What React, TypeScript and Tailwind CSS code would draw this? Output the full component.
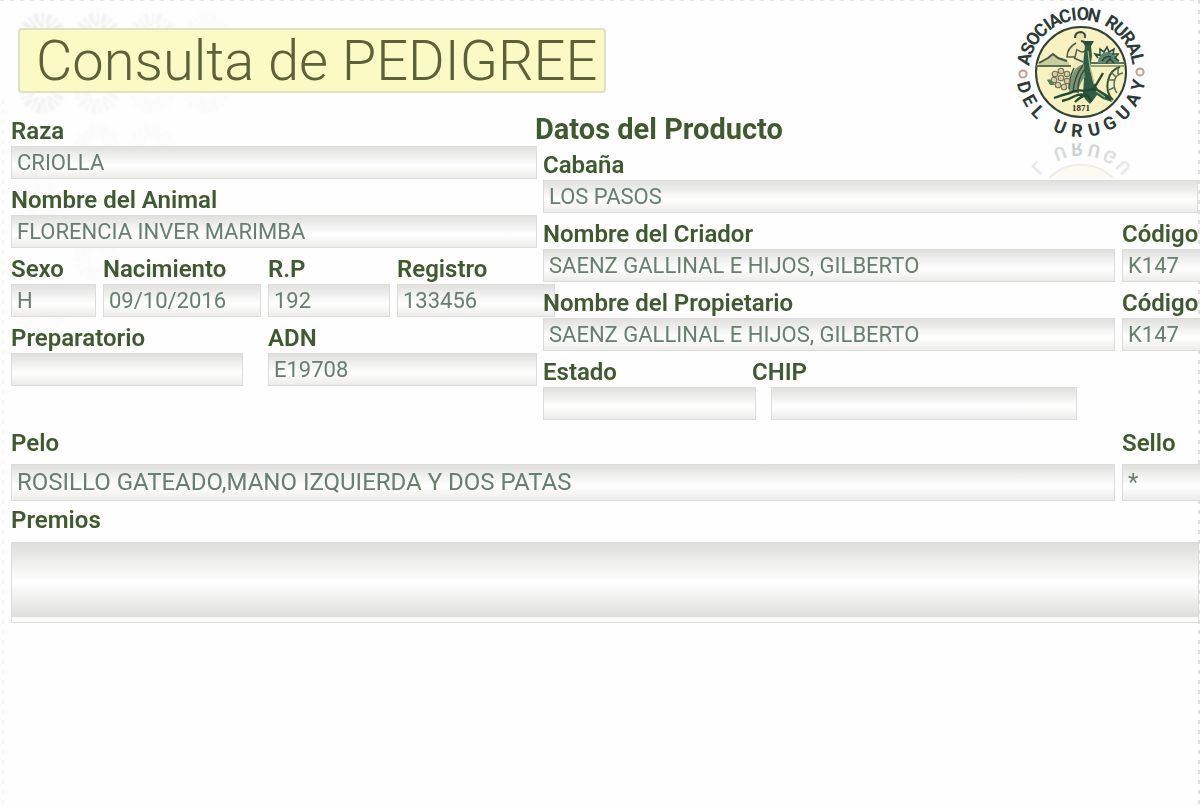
import React, { useId } from "react";

const labelClass = "block h-[30px] whitespace-nowrap text-[24px] leading-[31px] font-semibold text-[#3f5a2e]";
const inputClass =
  "block w-full min-w-0 border border-[#dcdcda] bg-linear-to-b from-[#e0e0df] via-white via-60% to-[#ececea] px-[5px] text-[#66806f] outline-none";
const rowInput = "h-[33px] pb-px text-[22px] leading-7";

type FieldProps = { label: string; value?: string; inputWidth?: string };

function Field({ label, value = "", inputWidth = "" }: FieldProps) {
  const id = useId();
  return (
    <div className="min-w-0">
      <label htmlFor={id} className={labelClass}>{label}</label>
      <input id={id} type="text" readOnly defaultValue={value} className={`${inputClass} ${rowInput} ${inputWidth}`} />
    </div>
  );
}

const topLetters: [string, number][] = [
  ["A", -77], ["S", -66], ["O", -55], ["C", -44], ["I", -35], ["A", -27], ["C", -16], ["I", -7], ["O", 2], ["N", 13],
  ["R", 32], ["U", 43], ["R", 54], ["A", 66], ["L", 77],
];
const bottomLetters: [string, number][] = [
  ["D", -75], ["E", -61], ["L", -47], ["U", -21], ["R", -4], ["U", 13], ["G", 29], ["U", 46], ["A", 62], ["Y", 77],
];
const letterStyle = {
  fontFamily: "Roboto, sans-serif",
  fontSize: 18,
  fontWeight: 700,
  fill: "#2c3b36",
  textAnchor: "middle" as const,
};

function Emblem() {
  return (
    <g>
      <g {...letterStyle}>
        {topLetters.map(([c, a], i) => (
          <text key={i} x="80" y="20" transform={`rotate(${a} 80 72)`}>{c}</text>
        ))}
        {bottomLetters.map(([c, a], i) => (
          <text key={i} x="80" y="137" transform={`rotate(${-a} 80 72)`}>{c}</text>
        ))}
      </g>
      <circle cx="22" cy="74" r="3.6" fill="#fff" stroke="#c39c90" strokeWidth="2" />
      <circle cx="139" cy="72" r="3.6" fill="#fff" stroke="#c39c90" strokeWidth="2" />
      <circle cx="80" cy="72" r="45" fill="#f8f2c0" stroke="#2f4336" strokeWidth="2" />
      <path d="M36 64 L47 57 L52 54 L58 58 L62 59 L68 62 V66 H36Z" fill="#c9cf9c" />
      <path d="M38 63 L47 58 L52 54 L57 58 L66 61" fill="none" stroke="#3f5a4a" strokeWidth="2" />
      <path d="M35 66 H70 M90 63 H124" stroke="#5c7058" strokeWidth="2" />
      <path d="M90 66 H124" stroke="#93a478" strokeWidth="2" />
      <path d="M97 63 q0 -10 9 -11 q9 0 11 9 l3 2Z" fill="#5c8573" />
      <path d="M97 58 l-3 -4 5 1 0 -6 4 3 3 -5 2 5 5 -3 -1 5 5 0 -3 4 4 3" fill="none" stroke="#2f5040" strokeWidth="1.6" />
      <path d="M101 61 q4 -6 9 -4 M105 63 l4 -4 4 4" fill="none" stroke="#274536" strokeWidth="1.6" />
      <path d="M74 43 L82 44 L84 66 L90 93 L71 91 L71 68 L74 59 L66 57 Q67 47 74 43Z" fill="#eeeab9" />
      <path d="M75 43 q-9 5 -9 14 l8 0 2 -8 M77 50 q5 4 8 0 M73 58 l9 4" fill="none" stroke="#4b5f47" strokeWidth="1.5" />
      <circle cx="79" cy="37" r="4.5" fill="#e9e2b0" />
      <path d="M74 38 q0 -6 6 -6 q5 1 4 6 M80 41 l4 1" fill="none" stroke="#35473a" strokeWidth="2" />
      <path d="M81 41 h12 l-3 5 h-6Z" fill="#2d4b3c" />
      <path d="M84 45 h6 l1 11 -2 13 4 14 4 6 12 7 2 6 -9 -3 -6 -4 -3 4 -4 5 -5 -5 -2 -5 1 -15 -1 -14Z" fill="#2f5c43" />
      <path d="M83 64 q-8 2 -11 9 q-5 11 -4 19 l8 1 q4 -12 8 -16Z" fill="#7a9474" />
      <path d="M82 65 q-9 12 -10 27 M84 69 q-8 10 -7 24 M73 68 q-5 10 -5 21" fill="none" stroke="#2f4f3c" strokeWidth="1.4" />
      <path d="M53 98 q8 -3 16 -5 q7 -4 15 -2 q10 -4 17 3 l9 5 M61 101 q8 -2 13 -5 q6 -3 12 0 M74 102 q6 -6 12 -7 l5 6 M92 90 l6 -10 4 -7" fill="none" stroke="#234b34" strokeWidth="2.4" />
      <path d="M87 51 l2 16 4 17 M95 91 l9 6" stroke="#a9bd86" strokeWidth="1.2" fill="none" />
      <g fill="#d8cda0" stroke="#6f7257" strokeWidth="1.1">
        <circle cx="54" cy="74" r="2.8" /><circle cx="60" cy="71" r="2.8" /><circle cx="66" cy="74" r="2.8" />
        <circle cx="53" cy="80" r="2.8" /><circle cx="60" cy="78" r="2.8" /><circle cx="66" cy="81" r="2.8" />
        <circle cx="57" cy="85" r="2.8" /><circle cx="63" cy="87" r="2.8" />
      </g>
      <path d="M46 80 q3 -2 5 1 l3 4 -5 0Z" fill="#4c8352" />
      <path d="M119 67 A16 19 0 0 0 112 100" fill="none" stroke="#35513d" strokeWidth="2" />
      <path d="M122 73 q-8 1 -9 10 q0 6 3 10 M106 80 h8 M110 72 l5 5 M108 90 l6 -3 M117 68 v6" fill="none" stroke="#56705a" strokeWidth="1.5" />
      <text x="80" y="111" fontFamily="'Liberation Serif', serif" fontSize="9" fontWeight="700" fill="#2b2a20" textAnchor="middle">1871</text>
    </g>
  );
}

function Logo() {
  return (
    <svg viewBox="0 0 160 180" className="h-[180px] w-[160px]" role="img" aria-label="Asociación Rural del Uruguay">
      <Emblem />
      <g transform="translate(0 280) scale(1 -1)" aria-hidden="true">
        <g {...letterStyle}>
          {bottomLetters.slice(2, 8).map(([c, a], i) => (
            <text key={i} x="80" y="137" opacity={0.24 - Math.abs(a) / 330} transform={`rotate(${-a} 80 72)`}>{c}</text>
          ))}
        </g>
        <path d="M48 102 A45 45 0 0 0 112 102" fill="#faf8e8" fillOpacity="0.6" stroke="#eeeee2" strokeWidth="2" />
      </g>
    </svg>
  );
}

const stamps = [
  [42, 36], [97, 36], [152, 36], [207, 36], [42, 90], [97, 90], [152, 90], [207, 90],
  [97, 148], [152, 148], [42, 203], [97, 258], [42, 312],
];

function Backdrop() {
  return (
    <svg className="pointer-events-none absolute inset-0 -z-10 h-full w-full" aria-hidden="true">
      <defs>
        <filter id="soften"><feGaussianBlur stdDeviation="1" /></filter>
      </defs>
      <g fill="none" stroke="#777" filter="url(#soften)">
        {stamps.map(([x, y], i) => (
          <g key={i} opacity={Math.max(0.03, 0.17 - x / 1800 - y / 1600)}>
            <circle cx={x} cy={y} r="18" strokeWidth="10" strokeDasharray="2 3 4 3" />
            <circle cx={x} cy={y} r="11" strokeWidth="5" strokeDasharray="4 3" />
          </g>
        ))}
      </g>
      <line x1="0" y1="0" x2="100%" y2="0" stroke="#e6e6e6" strokeWidth="2" strokeDasharray="4 6" />
      <svg x="100%" overflow="visible">
        <line x1="-1" y1="0" x2="-1" y2="2000" stroke="#e0e0e0" strokeWidth="2" strokeDasharray="4 6" />
      </svg>
      <line x1="3" y1="100" x2="3" y2="2000" stroke="#f7f7f7" strokeWidth="2" strokeDasharray="4 6" />
    </svg>
  );
}

export default function App() {
  return (
    <main className="relative isolate min-h-screen overflow-hidden bg-[#fefefe] font-[Roboto,sans-serif]">
      <Backdrop />
      <div className="absolute top-0 right-[39px] -z-10"><Logo /></div>

      <header className="flex h-[108px] items-start pt-7 pl-[18px]">
        <h1 className="flex h-[65px] w-[588px] items-center rounded-sm border-2 border-[#e2e0c0] bg-[#fafac4] pl-4 text-[56px] font-light whitespace-nowrap text-[#5c6138]">
          Consulta de PEDIGREE
        </h1>
      </header>

      <form className="pr-0.5 pl-[11px]">
        <div className="flex gap-1.5">
          <section className="flex w-[526px] shrink-0 flex-col gap-1.5 pt-2">
            <Field label="Raza" value="CRIOLLA" />
            <Field label="Nombre del Animal" value="FLORENCIA INVER MARIMBA" />
            <div className="grid grid-cols-[85px_158px_122px_1fr] gap-[7px]">
              <Field label="Sexo" value="H" />
              <Field label="Nacimiento" value="09/10/2016" />
              <Field label="R.P" value="192" />
              <Field label="Registro" value="133456" inputWidth="min-w-[158px]" />
            </div>
            <div className="grid grid-cols-[232px_1fr] gap-[25px]">
              <Field label="Preparatorio" />
              <Field label="ADN" value="E19708" />
            </div>
          </section>

          <section className="relative flex min-w-0 grow flex-col gap-1.5">
            <div>
              <h2 className="-ml-2 h-[42px] text-[29px] leading-[43px] font-bold text-[#3f5a2e]">Datos del Producto</h2>
              <Field label="Cabaña" value="LOS PASOS" />
            </div>
            <div className="-mr-0.5 grid grid-cols-[1fr_78px] gap-[7px]">
              <Field label="Nombre del Criador" value="SAENZ GALLINAL E HIJOS, GILBERTO" />
              <Field label="Código" value="K147" inputWidth="border-r-0" />
            </div>
            <div className="-mr-0.5 grid grid-cols-[1fr_78px] gap-[7px]">
              <Field label="Nombre del Propietario" value="SAENZ GALLINAL E HIJOS, GILBERTO" />
              <Field label="Código" value="K147" inputWidth="border-r-0" />
            </div>
            <div>
              <div className="flex">
                <label htmlFor="estado" className={`${labelClass} w-[209px]`}>Estado</label>
                <label htmlFor="chip" className={labelClass}>CHIP</label>
              </div>
              <div className="flex gap-[15px]">
                <input id="estado" type="text" readOnly className={`${inputClass} ${rowInput} max-w-[213px]`} />
                <input id="chip" type="text" readOnly className={`${inputClass} ${rowInput} max-w-[306px]`} />
              </div>
            </div>
          </section>
        </div>

        <div className="mt-2 -mr-0.5 grid grid-cols-[1fr_78px] gap-x-[7px] gap-y-1.5">
          <label htmlFor="pelo" className={labelClass}>Pelo</label>
          <label htmlFor="sello" className={labelClass}>Sello</label>
          <input id="pelo" type="text" readOnly defaultValue="ROSILLO GATEADO,MANO IZQUIERDA Y DOS PATAS" className={`${inputClass} h-[37px] pb-0.5 text-[24px] leading-8`} />
          <input id="sello" type="text" readOnly defaultValue="*" className={`${inputClass} h-[37px] border-r-0 pb-0.5 text-[24px] leading-8`} />
        </div>

        <div className="mt-1 -mr-px flex flex-col gap-[7px]">
          <label htmlFor="premios" className={labelClass}>Premios</label>
          <textarea
            id="premios"
            readOnly
            className="block h-[81px] w-full resize-none border border-[#dcdcda] bg-[#fafafa] bg-[linear-gradient(#dededc,#ffffff_53%,#dededc)] bg-[length:100%_74px] bg-no-repeat px-[5px] text-[22px] text-[#66806f] outline-none"
          />
        </div>
      </form>
    </main>
  );
}
